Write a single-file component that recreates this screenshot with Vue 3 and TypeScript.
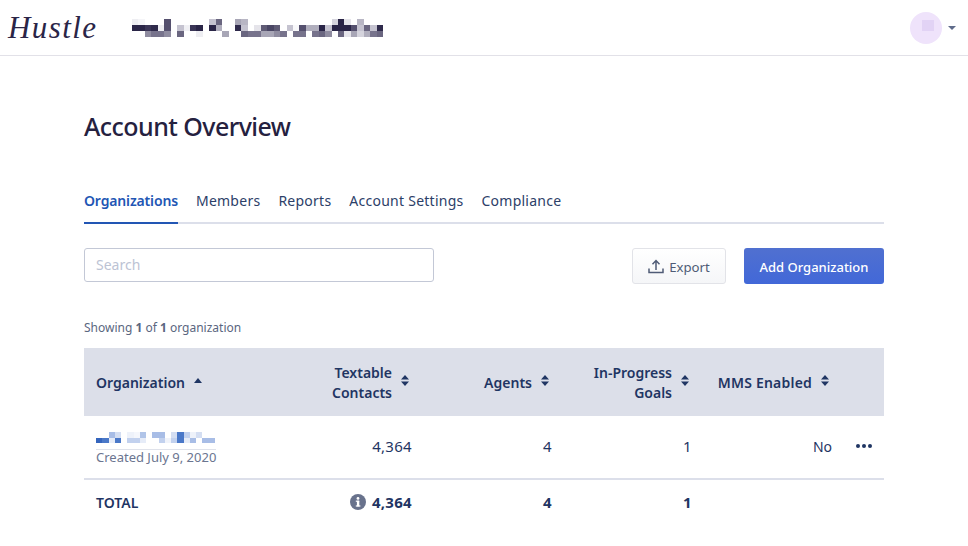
<script setup lang="ts">
const tabs = ['Organizations', 'Members', 'Reports', 'Account Settings', 'Compliance']

// pixelated (redacted) account name in the top bar: [column, row, colour]
const nameCells: [number, number, string][] = [
  [0, 0, '#eeeef2'], [1, 0, '#f5f5f8'], [5, 0, '#55506e'], [12, 0, '#c5c3d0'], [13, 0, '#6a6680'],
  [16, 0, '#a8a6b6'], [17, 0, '#b8b6c4'], [31, 0, '#d5d4dd'], [32, 0, '#2a2547'], [33, 0, '#e5e4ea'], [35, 0, '#b8b6c4'],
  [0, 1, '#2a2547'], [1, 1, '#2a2547'], [2, 1, '#3a3556'], [3, 1, '#2f2a4b'], [4, 1, '#eeeef2'], [5, 1, '#55506e'],
  [7, 1, '#c5c3d0'], [8, 1, '#f0f0f4'], [9, 1, '#3a3556'], [10, 1, '#2a2547'], [12, 1, '#2a2547'], [13, 1, '#b0aebd'],
  [16, 1, '#2f2a4b'], [17, 1, '#c5c3d0'], [19, 1, '#e5e4ea'], [20, 1, '#5f5b75'], [21, 1, '#4a4664'], [22, 1, '#5f5b75'],
  [24, 1, '#c5c3d0'], [25, 1, '#f8f8fa'], [26, 1, '#55506e'], [27, 1, '#b0aebd'], [28, 1, '#b0aebd'], [29, 1, '#2a2547'],
  [30, 1, '#c5c3d0'], [31, 1, '#2a2547'], [32, 1, '#2a2547'], [33, 1, '#2a2547'], [34, 1, '#55506e'], [35, 1, '#c5c3d0'],
  [36, 1, '#6a6680'], [37, 1, '#c5c3d0'], [38, 1, '#2f2a4b'],
  [2, 2, '#8f8ca0'], [3, 2, '#77738c'], [4, 2, '#77738c'], [5, 2, '#8f8ca0'], [7, 2, '#6a6680'], [10, 2, '#eeeef2'],
  [14, 2, '#a8a6b6'], [17, 2, '#6a6680'], [18, 2, '#77738c'], [19, 2, '#77738c'], [20, 2, '#a8a6b6'], [21, 2, '#a8a6b6'],
  [22, 2, '#8f8ca0'], [23, 2, '#77738c'], [25, 2, '#77738c'], [26, 2, '#77738c'], [28, 2, '#77738c'], [29, 2, '#6a6680'],
  [30, 2, '#8f8ca0'], [32, 2, '#6a6680'], [33, 2, '#e5e4ea'], [34, 2, '#a8a6b6'], [35, 2, '#d5d4dd'], [36, 2, '#b0aebd'],
  [37, 2, '#77738c'], [38, 2, '#6a6680']
]

// pixelated organisation name in the table row
const orgCells: [number, number, string][] = [
  [2, 0, '#a8bde6'], [3, 0, '#d4def2'], [5, 0, '#eef2fa'], [6, 0, '#f5f7fc'], [7, 0, '#b0c4e8'], [9, 0, '#a8bde6'],
  [10, 0, '#a8bde6'], [12, 0, '#d4def2'], [13, 0, '#4a78c8'], [14, 0, '#c2d1ee'], [15, 0, '#eef2fa'], [16, 0, '#d4def2'],
  [0, 1, '#3565bd'], [1, 1, '#4a78c8'], [2, 1, '#e6ecf8'], [3, 1, '#4a78c8'], [5, 1, '#c2d1ee'], [6, 1, '#c2d1ee'],
  [7, 1, '#e6ecf8'], [10, 1, '#c2d1ee'], [11, 1, '#f0f3fa'], [12, 1, '#c2d1ee'], [13, 1, '#4a78c8'], [14, 1, '#e6ecf8'],
  [15, 1, '#a8bde6'], [17, 1, '#a8bde6'], [18, 1, '#a8bde6']
]
</script>

<template>
  <div class="page">
    <header class="topbar">
      <span class="logo">Hustle</span>
      <div class="mosaic name-mosaic">
        <i
          v-for="(c, i) in nameCells"
          :key="i"
          :style="{ gridColumn: c[0] + 1, gridRow: c[1] + 1, background: c[2] }"
        ></i>
      </div>
      <div class="user">
        <div class="avatar"><span></span></div>
        <svg width="8" height="4" viewBox="0 0 8 4"><path d="M0 0h8L4 4z" fill="#5f6b8a" /></svg>
      </div>
    </header>

    <main class="content">
      <h1>Account Overview</h1>

      <nav class="tabs">
        <a v-for="(t, i) in tabs" :key="t" :class="{ active: i === 0 }">{{ t }}</a>
      </nav>

      <div class="toolbar">
        <input class="search" type="text" placeholder="Search" />
        <div class="actions">
          <button class="btn export">
            <svg width="16" height="15" viewBox="0 0 16 15" fill="none" stroke="#4f5b76" stroke-width="1.5">
              <path d="M1 9.5V13.5H15V9.5" />
              <path d="M8 11V2M4.5 5.2L8 1.6L11.5 5.2" />
            </svg>
            Export
          </button>
          <button class="btn primary">Add Organization</button>
        </div>
      </div>

      <p class="showing">Showing <b>1</b> of <b>1</b> organization</p>

      <div class="table">
        <div class="row head">
          <div class="col org">
            <span>Organization</span>
            <svg class="sort up" width="8" height="5" viewBox="0 0 8 5"><path d="M4 0l4 5H0z" /></svg>
          </div>
          <div class="col contacts">
            <span>Textable<br />Contacts</span>
            <svg class="sort" width="8" height="11" viewBox="0 0 8 11"><path d="M4 0l4 4.6H0zM4 11L0 6.4h8z" /></svg>
          </div>
          <div class="col agents">
            <span>Agents</span>
            <svg class="sort" width="8" height="11" viewBox="0 0 8 11"><path d="M4 0l4 4.6H0zM4 11L0 6.4h8z" /></svg>
          </div>
          <div class="col goals">
            <span>In-Progress<br />Goals</span>
            <svg class="sort" width="8" height="11" viewBox="0 0 8 11"><path d="M4 0l4 4.6H0zM4 11L0 6.4h8z" /></svg>
          </div>
          <div class="col mms">
            <span>MMS Enabled</span>
            <svg class="sort" width="8" height="11" viewBox="0 0 8 11"><path d="M4 0l4 4.6H0zM4 11L0 6.4h8z" /></svg>
          </div>
        </div>

        <div class="row body">
          <div class="col org stacked">
            <div class="mosaic org-mosaic">
              <i
                v-for="(c, i) in orgCells"
                :key="i"
                :style="{ gridColumn: c[0] + 1, gridRow: c[1] + 1, background: c[2] }"
              ></i>
            </div>
            <span class="created">Created July 9, 2020</span>
          </div>
          <div class="col contacts num">4,364</div>
          <div class="col agents num">4</div>
          <div class="col goals num">1</div>
          <div class="col mms num no">No</div>
          <div class="dots"><i></i><i></i><i></i></div>
        </div>

        <div class="row total">
          <div class="col org">TOTAL</div>
          <div class="col contacts num">
            <svg width="16" height="16" viewBox="0 0 16 16">
              <circle cx="8" cy="8" r="8" fill="#68728c" />
              <rect x="6.9" y="6.8" width="2.4" height="5.6" fill="#fff" />
              <rect x="5.8" y="6.6" width="3.4" height="1.2" fill="#fff" />
              <rect x="5.8" y="11.4" width="4.6" height="1.2" fill="#fff" />
              <circle cx="8" cy="4.4" r="1.4" fill="#fff" />
            </svg>
            4,364
          </div>
          <div class="col agents num">4</div>
          <div class="col goals num">1</div>
          <div class="col mms"></div>
        </div>
      </div>
    </main>
  </div>
</template>

<style>
body {
  background: #fff;
}
</style>

<style scoped>
.page {
  width: 968px;
  height: 546px;
  overflow: hidden;
  font-family: "Noto Sans", "Open Sans", sans-serif;
  color: #1f3563;
}

.topbar {
  height: 55px;
  border-bottom: 1px solid #e2e1e8;
  display: flex;
  align-items: center;
  padding: 0 12px 0 8px;
}

.logo {
  font-family: "Liberation Serif", serif;
  font-style: italic;
  font-weight: 400;
  font-size: 31px;
  letter-spacing: 1.4px;
  color: #2a2547;
  width: 124px;
}

.mosaic {
  display: grid;
}

.name-mosaic {
  grid-template-columns: repeat(39, 6.44px);
  grid-template-rows: repeat(3, 6.33px);
  margin-top: 1px;
}

.org-mosaic {
  grid-template-columns: repeat(19, 6.25px);
  grid-template-rows: repeat(2, 5.8px);
}

.user {
  margin-left: auto;
  display: flex;
  align-items: center;
  gap: 6px;
}

.avatar {
  width: 32px;
  height: 32px;
  border-radius: 50%;
  background: #efe3fb;
  position: relative;
}

.avatar span {
  position: absolute;
  left: 12px;
  top: 8px;
  width: 12px;
  height: 11px;
  background: #e2d3f5;
}

.content {
  padding: 0 84px;
}

h1 {
  margin: 53px 0 0;
  font-size: 25px;
  line-height: 34px;
  font-weight: 500;
  letter-spacing: -0.55px;
  color: #25213f;
}

.tabs {
  margin-top: 48px;
  display: flex;
  gap: 18px;
  border-bottom: 2px solid #dcdfea;
  font-size: 14px;
  line-height: 20px;
  letter-spacing: 0.25px;
}

.tabs a {
  padding-bottom: 11px;
  margin-bottom: -2px;
  color: #2c4068;
}

.tabs a.active {
  color: #2256b4;
  font-weight: 600;
  letter-spacing: -0.15px;
  border-bottom: 2px solid #2256b4;
}

.toolbar {
  margin-top: 24px;
  display: flex;
  align-items: flex-start;
  justify-content: space-between;
}

.search {
  width: 350px;
  height: 34px;
  box-sizing: border-box;
  border: 1px solid #c3c8d6;
  border-radius: 3px;
  padding: 0 11px 2px;
  font: inherit;
  font-size: 14px;
  outline: none;
}

.search::placeholder {
  color: #bcc3d4;
}

.actions {
  display: flex;
  gap: 18px;
}

.btn {
  height: 36px;
  border-radius: 3px;
  font: inherit;
  font-size: 13.2px;
  display: flex;
  align-items: center;
  justify-content: center;
  padding: 2px 0 0;
}

.export {
  width: 94px;
  gap: 5px;
  background: linear-gradient(#fff, #f5f6f8);
  border: 1px solid #e2e3e8;
  color: #4f5b76;
}

.export svg {
  margin-top: -2px;
}

.primary {
  width: 140px;
  border: 0;
  background: linear-gradient(#5070d0, #4268d8);
  color: #fff;
  font-size: 13px;
  font-weight: 500;
}

.showing {
  margin: 35px 0 0;
  font-size: 12px;
  line-height: 17px;
  color: #5a6680;
}

.showing b {
  font-weight: 700;
}

.table {
  margin-top: 12px;
}

.row {
  display: flex;
  align-items: center;
  position: relative;
}

.col {
  display: flex;
  align-items: center;
  justify-content: flex-end;
  box-sizing: border-box;
}

.org {
  width: 232px;
  padding-left: 12px;
  justify-content: flex-start;
}

.contacts { width: 96px; }
.agents { width: 140px; }
.goals { width: 140px; }
.mms { width: 140px; }

.head {
  height: 68px;
  box-sizing: border-box;
  padding-top: 2px;
  background: #dcdfe9;
  font-size: 14px;
  line-height: 20px;
  font-weight: 600;
  color: #1f3563;
}

.head .col {
  text-align: right;
  gap: 9px;
  padding-right: 3px;
}

.head .org {
  justify-content: flex-start;
  text-align: left;
}

.head .mms span {
  letter-spacing: 0.2px;
}

.sort {
  fill: #1f3563;
  flex: none;
  margin-top: -5px;
}

.sort.up {
  margin-top: -6px;
}

.body {
  height: 62px;
  border-bottom: 2px solid #dcdfea;
  font-size: 14px;
}

.num {
  font-size: 15px;
  letter-spacing: 0.3px;
}

.body .num {
  margin-top: -2px;
}

.no {
  font-size: 14px;
  letter-spacing: 0;
}

.stacked {
  flex-direction: column;
  align-items: flex-start;
  margin-top: 3px;
}

.created {
  font-size: 13px;
  line-height: 15px;
  color: #6b7590;
  margin-top: 6px;
  border-top: 1px solid #dfe2ea;
}

.dots {
  position: absolute;
  right: 12px;
  top: 28px;
  display: flex;
  gap: 2px;
}

.dots i {
  width: 4px;
  height: 4px;
  border-radius: 50%;
  background: #1f3563;
}

.total {
  height: 48px;
  box-sizing: border-box;
  padding-bottom: 4px;
  font-size: 14px;
  font-weight: 600;
}

.total .num {
  gap: 6px;
  font-weight: 700;
}
</style>
